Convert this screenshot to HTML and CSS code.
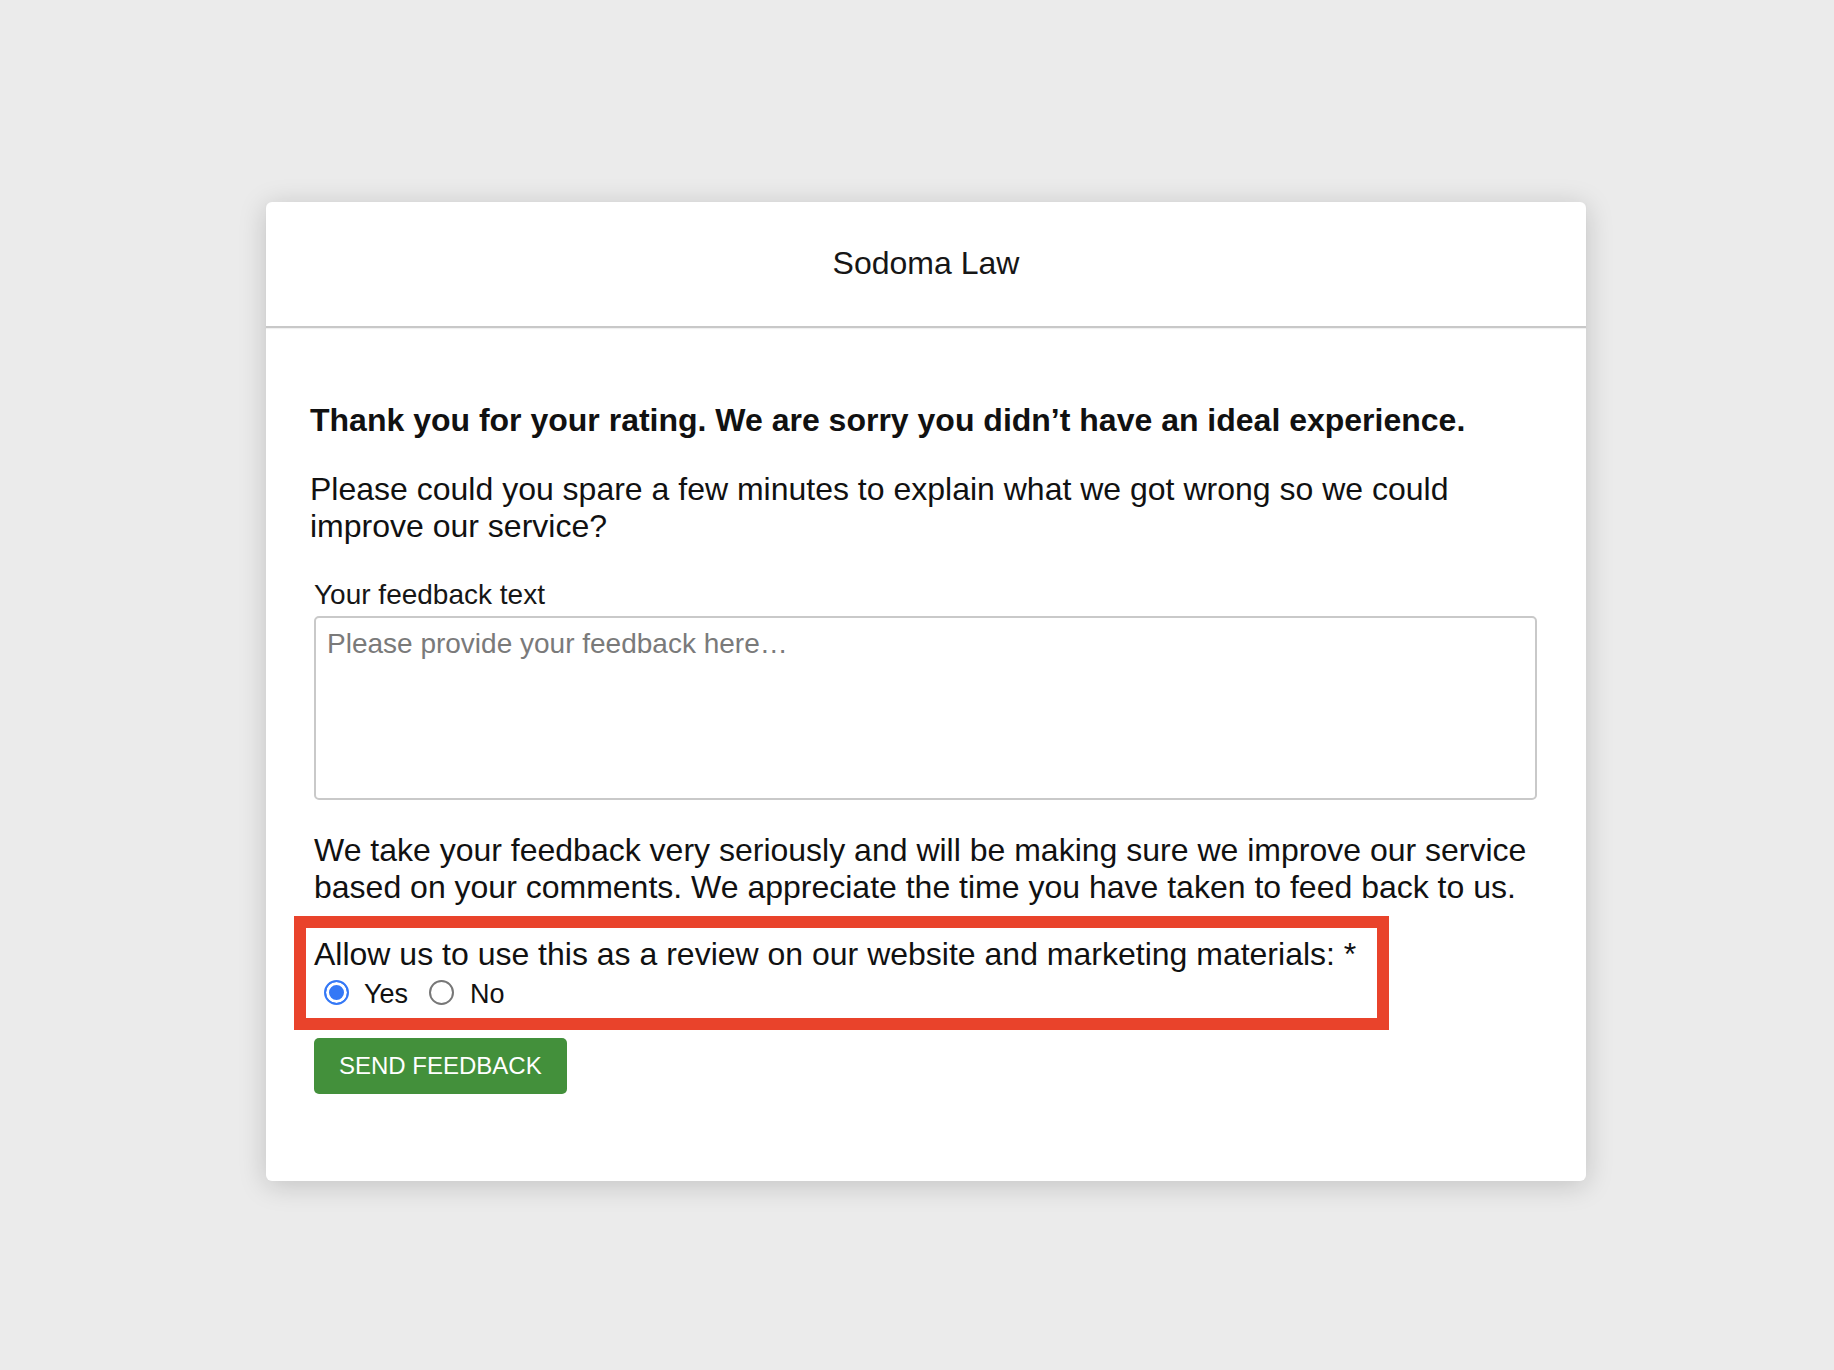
FILE: index.html
```html
<!DOCTYPE html>
<html lang="en">
<head>
<meta charset="utf-8">
<title>Sodoma Law - Feedback</title>
<link rel="stylesheet" href="styles.css">
</head>
<body>
<div class="page">
  <div class="card">
    <header class="card-header">Sodoma Law</header>
    <div class="card-body">
      <h2 class="intro-title">Thank you for your rating. We are sorry you didn’t have an ideal experience.</h2>
      <p class="intro-text">Please could you spare a few minutes to explain what we got wrong so we could improve our service?</p>
      <form class="feedback-form" onsubmit="return false;">
        <label class="field-label" for="feedback">Your feedback text</label>
        <textarea id="feedback" class="field-textarea" placeholder="Please provide your feedback here…"></textarea>
        <p class="note">We take your feedback very seriously and will be making sure we improve our service based on your comments. We appreciate the time you have taken to feed back to us.</p>
        <div class="consent">
          <div class="consent-label">Allow us to use this as a review on our website and marketing materials: *</div>
          <div class="consent-options">
            <label class="option"><input class="radio" type="radio" name="consent" value="yes" checked><span class="option-text">Yes</span></label>
            <label class="option"><input class="radio" type="radio" name="consent" value="no"><span class="option-text">No</span></label>
          </div>
        </div>
        <button class="send-btn" type="submit">SEND FEEDBACK</button>
      </form>
    </div>
  </div>
</div>
</body>
</html>
```

FILE: styles.css
```css
html, body {
  margin: 0;
  padding: 0;
  background: #ebebeb;
}

body {
  font-family: "Liberation Sans", Arial, Helvetica, sans-serif;
  color: #111111;
}

.page {
  padding: 202px 0 120px 266px;
}

.card {
  width: 1320px;
  background: #ffffff;
  border-radius: 6px;
  box-shadow: 0 4px 28px rgba(0, 0, 0, 0.18);
}

.card-header {
  padding: 43px 0 44px;
  font-size: 32px;
  line-height: 37px;
  text-align: center;
  color: #161616;
  border-bottom: 2px solid #c8c8c8;
  box-shadow: 0 1px 1px rgba(0, 0, 0, 0.06);
}

.card-body {
  padding: 0 44px 87px 44px;
}

.intro-title {
  margin: 74px 0 32px;
  font-size: 32px;
  line-height: 1.15;
  font-weight: bold;
  color: #111111;
}

.intro-text {
  margin: 0 0 35px;
  font-size: 32px;
  line-height: 1.15;
}

.feedback-form {
  padding: 0 5px 0 4px;
}

.field-label {
  display: block;
  font-size: 28px;
  line-height: 32px;
  margin-bottom: 5px;
  color: #161616;
}

.field-textarea {
  display: block;
  box-sizing: border-box;
  width: 100%;
  height: 184px;
  margin: 0;
  padding: 10px 11px;
  border: 2px solid #c9c9c9;
  border-radius: 5px;
  font-family: "Liberation Sans", Arial, Helvetica, sans-serif;
  font-size: 28px;
  line-height: 32px;
  color: #111111;
  resize: none;
  outline: none;
}

.field-textarea::placeholder {
  color: #7a7a7a;
}

.note {
  margin: 32px 0 30px;
  font-size: 32px;
  line-height: 1.15;
}

.consent {
  width: fit-content;
  padding-right: 13px;
  outline: 12px solid #e9432b;
  outline-offset: 8px;
}

.consent-label {
  font-size: 32px;
  line-height: 1.15;
}

.consent-options {
  display: flex;
  align-items: center;
  height: 37px;
}

.option {
  display: flex;
  align-items: center;
  font-size: 27px;
  line-height: 32px;
  color: #111111;
}

.radio {
  appearance: none;
  -webkit-appearance: none;
  box-sizing: border-box;
  width: 25px;
  height: 25px;
  margin: 2px 0 0 10px;
  border: 2px solid #777777;
  border-radius: 50%;
  background: #ffffff;
}

.radio:checked {
  border-color: #3478f6;
  background: #3478f6;
  box-shadow: inset 0 0 0 3px #ffffff;
}

.option-text {
  margin-left: 15px;
  padding-top: 6px;
}

.option + .option .radio {
  margin-left: 21px;
}

.option + .option .option-text {
  margin-left: 16px;
}

.send-btn {
  display: block;
  margin-top: 28px;
  height: 56px;
  padding: 0 25px;
  border: none;
  border-radius: 5px;
  background: #43903b;
  color: #ffffff;
  font-family: "Liberation Sans", Arial, Helvetica, sans-serif;
  font-size: 24px;
  line-height: 56px;
  cursor: pointer;
}
```
